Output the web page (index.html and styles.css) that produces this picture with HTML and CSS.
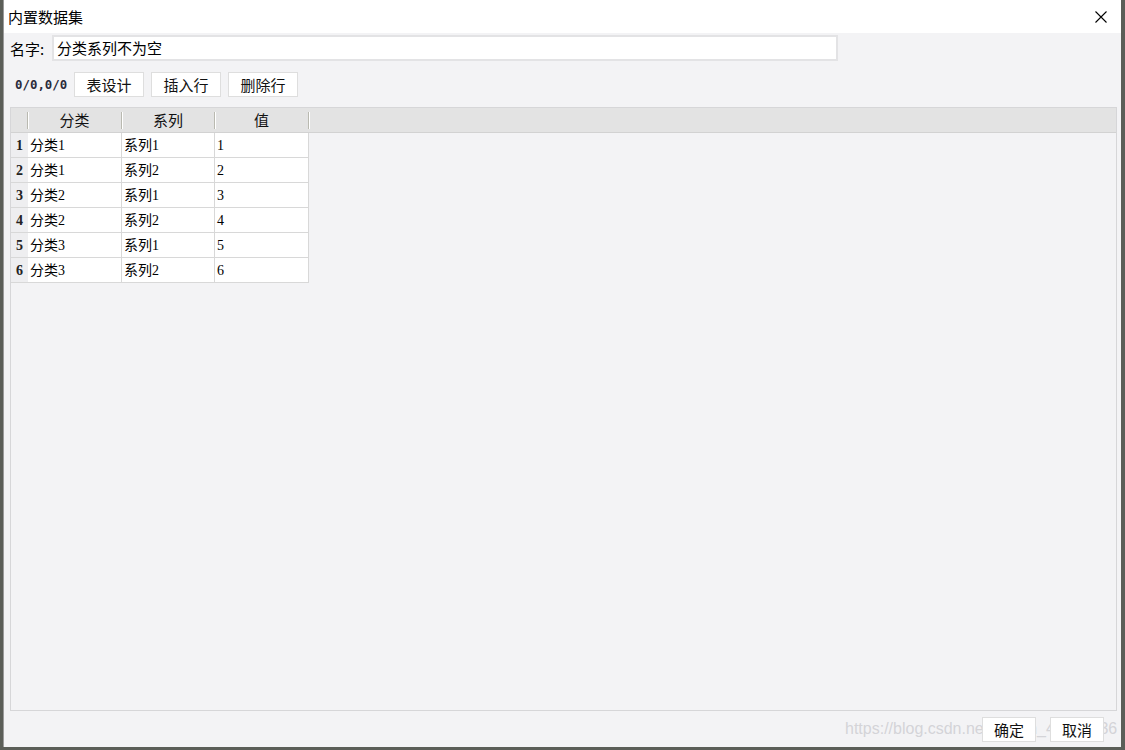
FILE: index.html
```html
<!DOCTYPE html>
<html lang="zh-CN">
<head>
    <meta charset="UTF-8">
    <title>内置数据集</title>
    <link rel="stylesheet" href="styles.css">
</head>
<body>
    <div class="window">
        <div class="titlebar">
            <span class="title">内置数据集</span>
            <svg class="close" width="12" height="12" viewBox="0 0 12 12">
                <path d="M0.5 0.5 L11.5 11.5 M11.5 0.5 L0.5 11.5" stroke="#000" stroke-width="1.1" fill="none"/>
            </svg>
        </div>

        <div class="content">
            <div class="name-row">
                <label class="name-label">名字:</label>
                <div class="name-input">分类系列不为空</div>
            </div>

            <div class="toolbar">
                <span class="pos">0/0,0/0</span>
                <button class="btn">表设计</button>
                <button class="btn">插入行</button>
                <button class="btn">删除行</button>
            </div>

            <div class="grid-panel">
                <div class="grid-head">
                    <div class="hc rownum"><span></span></div>
                    <div class="hc c1"><span>分类</span></div>
                    <div class="hc c2"><span>系列</span></div>
                    <div class="hc c3"><span>值</span></div>
                </div>
                <div id="grid-body"></div>
            </div>

            <div class="footer">
                <button class="btn small">确定</button>
                <button class="btn small">取消</button>
            </div>
        </div>

        <div class="watermark">https://blog.csdn.net/weixin_44848336</div>
    </div>

    <script>
        const rows = [
            ['分类1', '系列1', '1'],
            ['分类1', '系列2', '2'],
            ['分类2', '系列1', '3'],
            ['分类2', '系列2', '4'],
            ['分类3', '系列1', '5'],
            ['分类3', '系列2', '6']
        ];

        document.getElementById('grid-body').innerHTML = rows.map((r, i) => `
            <div class="grid-row">
                <div class="cell rownum">${i + 1}</div>
                <div class="cell c1">${r[0]}</div>
                <div class="cell c2">${r[1]}</div>
                <div class="cell c3">${r[2]}</div>
            </div>
        `).join('');
    </script>
</body>
</html>
```

FILE: styles.css
```css
body {
    margin: 0;
    padding: 0 0 0 3px;
    background: #5b5e58;
    font-family: "Noto Sans CJK SC", sans-serif;
    overflow: hidden;
}

.window {
    position: relative;
    width: 1117px;
    height: 747px;
    background: #f3f3f5;
    border-left: 1px solid #9a9a9a;
    display: flex;
    flex-direction: column;
}

.titlebar {
    height: 33px;
    background: #fff;
    display: flex;
    align-items: center;
    justify-content: space-between;
    padding: 0 14px 0 4px;
}

.title {
    font-size: 15px;
    color: #000;
}

.close {
    display: block;
}

.content {
    flex: 1;
    display: flex;
    flex-direction: column;
    padding: 0 4px 5px 6px;
}

.name-row {
    display: flex;
    align-items: center;
    margin-top: 2px;
    height: 26px;
}

.name-label {
    width: 42px;
    font-size: 15px;
    color: #000;
}

.name-input {
    width: 779px;
    height: 22px;
    line-height: 22px;
    border: 2px solid #e3e3e5;
    background: #fff;
    padding-left: 3px;
    font-size: 15px;
    color: #000;
}

.toolbar {
    display: flex;
    align-items: center;
    gap: 7px;
    margin-top: 11px;
    height: 25px;
}

.pos {
    margin-left: 5px;
    width: 52px;
    font-family: "DejaVu Sans Mono", monospace;
    font-weight: bold;
    font-size: 12.4px;
    color: #2a2a3a;
}

.btn {
    width: 70px;
    height: 25px;
    padding: 0;
    background: #fff;
    border: 1px solid #dedede;
    font-family: "Noto Sans CJK SC", sans-serif;
    font-size: 15px;
    color: #111;
}

.btn.small {
    width: 54px;
    position: relative;
    z-index: 1;
}

.grid-panel {
    flex: 1;
    margin-top: 10px;
    border: 1px solid #d6d6d8;
    background: #f3f3f5;
}

.grid-head {
    display: flex;
    height: 24px;
    background: #e3e3e3;
    border-bottom: 1px solid #d2d2d2;
}

.hc {
    padding: 4px 0 3px;
    box-sizing: border-box;
}

.hc span {
    display: block;
    height: 100%;
    border-right: 1px solid #b9b9b0;
    box-shadow: 1px 0 0 #fff;
    text-align: center;
    font-size: 15px;
    line-height: 16px;
    color: #111;
}

.rownum { width: 17px; }
.c1 { width: 94px; }
.c2 { width: 93px; }
.c3 { width: 94px; }

.grid-row {
    display: flex;
    height: 25px;
}

.cell {
    box-sizing: border-box;
    height: 25px;
    line-height: 25px;
    background: #fff;
    border-right: 1px solid #d8d8d8;
    border-bottom: 1px solid #d8d8d8;
    padding-left: 2px;
    font-family: "Liberation Serif", "Noto Sans CJK SC", serif;
    font-size: 14px;
    color: #000;
}

.cell.rownum {
    background: #eeeef0;
    text-align: center;
    padding-left: 0;
    font-weight: bold;
    font-size: 14px;
    color: #222;
    border-right: none;
}

.footer {
    display: flex;
    justify-content: flex-end;
    gap: 14px;
    margin-top: 6px;
    padding-right: 13px;
}

.watermark {
    position: absolute;
    left: 841px;
    top: 720px;
    font-family: "Liberation Sans", sans-serif;
    font-size: 16px;
    color: #d4d4d8;
}
```
